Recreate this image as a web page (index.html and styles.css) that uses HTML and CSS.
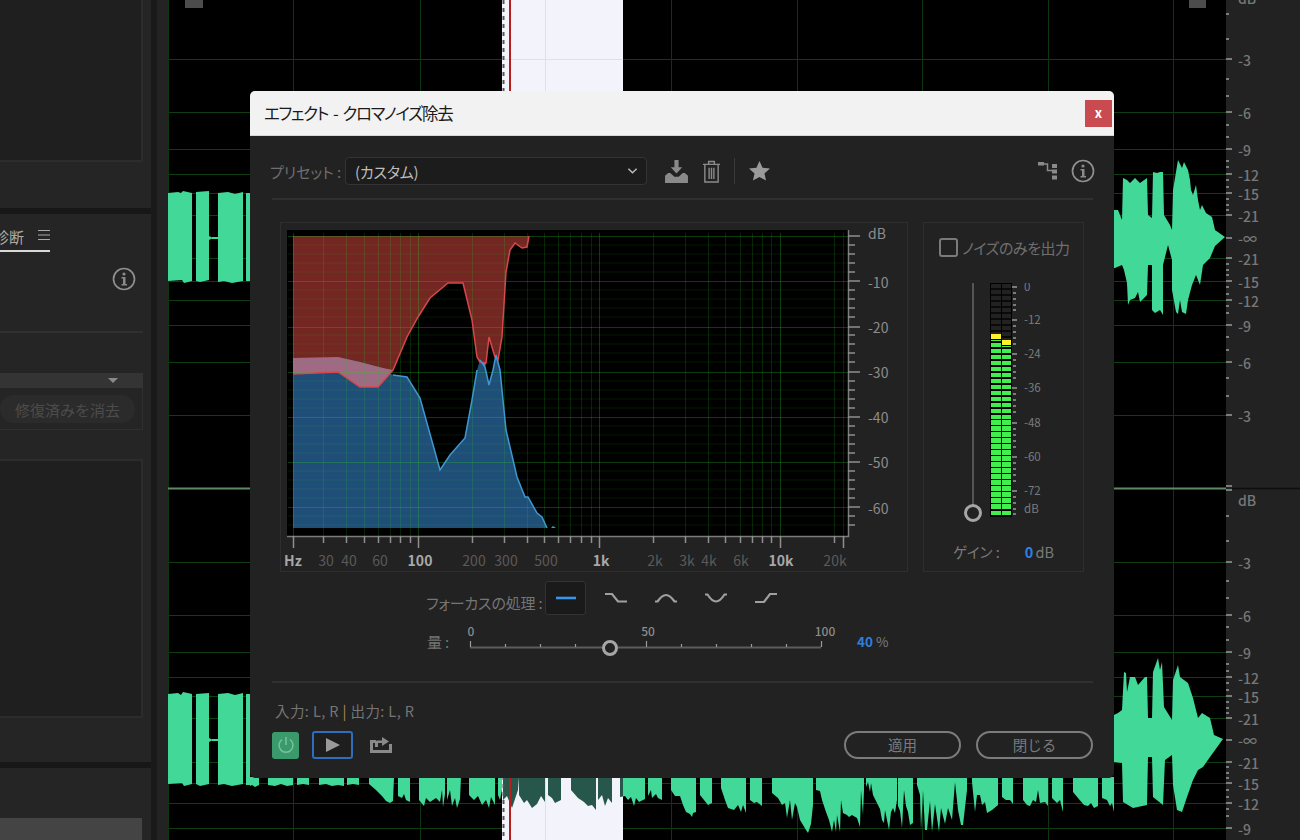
FILE: index.html
```html
<!DOCTYPE html>
<html lang="ja">
<head>
<meta charset="utf-8">
<title>エフェクト - クロマノイズ除去</title>
<link rel="stylesheet" href="styles.css">
</head>
<body>
<div class="app">
  <aside class="side">
    <section class="pane pane-a"><div class="inset inset-a"></div></section>
    <section class="pane pane-b">
      <div class="tabs"><div class="tab"><span class="tab-name">診断</span><svg class="burger" viewBox="0 0 12 12"><path d="M0 1.500H12M0 6H12M0 10.500H12"/></svg></div></div>
      <div class="info-row">
        <svg class="ico-info" viewBox="0 0 24 24"><circle cx="12" cy="12" r="10.5"/><circle class="solid" cx="12" cy="7" r="1.6"/><path class="solid" d="M9.5 10h4v7h1.5v1.5H9.5V17H11v-5.5H9.5z"/></svg>
      </div>
      <div class="side-divider"></div>
      <div class="collapse-bar"><span class="tri"></span></div>
      <div class="clear-box"><button class="clear-btn">修復済みを消去</button></div>
      <div class="inset inset-b"></div>
    </section>
    <section class="pane pane-c"><div class="inset-c"></div></section>
  </aside>
  <div class="gutter"></div>

  <svg class="track" viewBox="168 0 1058 840" preserveAspectRatio="none">
    <defs>
      <clipPath id="outsideSel"><path d="M168 0H502V840H168zM623 0H1226V840H623z"/></clipPath>
      <clipPath id="insideSel"><rect x="502" y="0" width="121" height="840"/></clipPath>
      <path id="strip" d="M250 777V786L252 785 255 787 259 785V777zM268 777V785L275 786 281 784 287 786 293 785V777zM297 777V785L303 784 309 785V777zM319 777V785L326 784 332 786 338 785 344 786V777zM347 777V785L353 784 359 785V777zM369 777V784L376 790 382 796 386 801 390 803 393 801 394 777zM398 777V796L402 798 404 794 406 800 410 802V777zM419 777V800L424 806 426 798 430 802 436 798 440 802 442 790 443 807 445 794V777zM447 777V800L450 790 452 806 455 798 457 808 460 799 461 777zM469 777V795L474 800 478 796 482 805 486 800 489 808 491 797 495 805V777zM498 777V795L500 800 502 790V777zM503 777V800L507 796 512 808 518 790 519 777zM519 777V795L524 803 527 800 532 808 537 804 541 796 545 802V777zM548 777V795L552 798 555 803 561 800V777zM571 777V790L578 798 584 802 588 806 592 805 596 810V777zM598 777V800L602 795 605 806 608 798 612 803V777zM620 777V797L625 796 628 800 631 797 634 806 636 798 639 802 645 799V777zM648 777V796L651 790 652 798 656 794 658 798 662 800V777zM671 777V790L675 796 680 796 683 805 686 812 690 814 692 817 693 813 696 812V777zM700 777V795L704 800 708 805 712 803V777zM721 777V788L725 800 728 808 734 810 738 805 741 812 743 805 746 813V777zM750 777V800L754 803 757 802 762 806V777zM772 777V793L778 798 782 805 785 803 787 818 790 800 792 820 795 803 797 807 800 820 803 825 806 830 808 833 811 824 813 805V777zM816 777V790L820 791 822 800 826 812 829 820 832 832 834 820 836 832 837 815 840 832 841 800 843 813 847 815 849 817 852 815 857 818 860 827 861 790 863 815 864 790V777zM866 777V787L868 782 870 792 871 783 873 795 880 809 882 820 884 823 885 810 889 830 891 812 893 808 895 813 897 800V777zM898 777V806L900 811 902 828 904 790 906 806 908 812 910 825 913 823V777zM917 777V785L920 795 921 830 923 790 925 830 927 830 930 801 932 832 935 804 939 832 941 808 945 824 948 808 952 820 955 782 958 810 961 825 963 825 967 790V777zM972 777V782L975 812 977 795 980 795 982 805 985 802 987 813 992 810 998 805V777zM1002 777V797L1006 800 1010 800 1013 804V777zM1023 777V800L1027 805 1030 806 1033 800 1036 802 1038 790 1040 803 1045 802 1048 806V777zM1052 777V798L1057 803 1060 800 1063 812V777zM1073 777V792L1078 798 1084 805 1088 806 1091 803 1094 808 1098 806V777zM1102 777V798L1107 800 1110 806 1112 803 1114 812V777z"/>
    </defs>
    <rect class="k-black" x="168" y="0" width="1058" height="840"/>
    <rect class="k-sel" x="502" y="0" width="121" height="840"/>
    <g clip-path="url(#outsideSel)">
      <path class="grid-d" d="M168 59.500H1226M168 112.500H1226M168 149.500H1226M168 174.500H1226M168 193.500H1226M168 215.500H1226M168 258.500H1226M168 281.500H1226M168 300.500H1226M168 325.500H1226M168 362.500H1226M168 415.500H1226M168 562.500H1226M168 615.500H1226M168 652.500H1226M168 677.500H1226M168 696.500H1226M168 718.500H1226M168 762.500H1226M168 783.500H1226M168 803.500H1226M168 828.500H1226"/>
      <path class="grid-v" d="M168.500 0V840M293.500 0V840M420.500 0V840M545.500 0V840M671.500 0V840M797.500 0V840M922.500 0V840M1048.500 0V840M1173.500 0V840"/>
      <use href="#strip" class="wave"/>
    </g>
    <g clip-path="url(#insideSel)">
      <path class="grid-l" d="M502 59.500H623M502 562.500H623M502 615.500H623M545.500 0V840"/>
      <use href="#strip" class="wave-sel"/>
    </g>
    <path class="wave-edge" d="M503.500 0V840"/>
    <path class="playhead" d="M510 0V840"/>
    <path class="wave" d="M168 193L178 192 181 193 183 191 192 193V281L184 283 182 280 168 281zM196 192L209 191V280L200 282 196 281zM218 193L228 192 235 194 243 192V281L232 283 224 281 218 282zM246 193H250V281H246zM209 236L213 238 209 240zM212 237H218V239H212z"/>
    <path class="wave" d="M168 694L178 693 181 695 183 692 192 694V784L184 786 182 783 168 784zM196 694L209 693V784L200 786 196 784zM218 694L228 693 235 695 243 693V784L232 786 224 784 218 785zM246 694H250V785H246zM209 738L213 740 209 742zM212 739H218V741H212z"/>
    <path class="wave" d="M1114 210L1118 210 1122 220 1123 178 1127 180 1130 183 1135 178 1140 183 1147 178 1148 215 1152 218 1153 172 1157 173 1160 172 1163 172 1164 215 1170 225 1172 230 1173 190 1178 160 1182 168 1184 162 1188 170 1190 180 1191 190 1193 195 1196 185 1198 200 1200 210 1202 205 1206 213 1212 217 1215 230 1225 237 1215 246 1210 258 1203 265 1200 285 1196 275 1192 285 1188 300 1186 314 1182 312 1180 300 1178 314 1176 312 1172 290 1172 260 1168 245 1163 265 1163 315 1160 310 1155 313 1152 310 1152 265 1148 265 1147 295 1140 302 1138 292 1135 298 1130 300 1128 305 1127 283 1124 270 1122 265 1115 268 1114 268z"/>
    <path class="wave" d="M1114 715L1118 713 1122 710 1124 672 1126 673 1127 692 1130 677 1135 677 1138 685 1145 677 1147 677 1148 718 1152 718 1153 672 1158 658 1160 670 1162 662 1164 707 1172 720 1173 680 1178 665 1180 677 1188 683 1193 698 1198 718 1202 713 1210 718 1214 735 1223 739 1210 757 1203 767 1198 770 1193 780 1187 797 1182 812 1177 810 1173 785 1172 755 1165 760 1163 805 1153 797 1152 757 1148 757 1147 805 1133 808 1123 802 1122 763 1115 762 1114 762z"/>
    <path class="center-line" d="M168 488.500H1226"/>
    <rect class="handle" x="185" y="0" width="18" height="8"/>
    <rect class="handle" x="1189" y="0" width="17" height="8"/>
  </svg>

  <svg class="ruler" viewBox="1226 0 74 840" preserveAspectRatio="none">
    <path class="r-minor" d="M1226 14h3M1226 39h3M1226 79h3M1226 96h3M1226 125h3M1226 137h3M1226 161h3M1226 167h3M1226 180h3M1226 187h3M1226 199h3M1226 205h3M1226 210h3M1226 264h3M1226 270h3M1226 275h3M1226 287h3M1226 294h3M1226 306h3M1226 313h3M1226 337h3M1226 350h3M1226 378h3M1226 396h3M1226 516h3M1226 541h3M1226 581h3M1226 598h3M1226 627h3M1226 640h3M1226 664h3M1226 671h3M1226 683h3M1226 690h3M1226 702h3M1226 708h3M1226 713h3M1226 767h3M1226 773h3M1226 778h3M1226 790h3M1226 797h3M1226 809h3M1226 816h3"/>
    <path class="r-major" d="M1226 59h6M1226 112h6M1226 149h6M1226 174h6M1226 193h6M1226 215h6M1226 238h6M1226 258h6M1226 281h6M1226 300h6M1226 325h6M1226 362h6M1226 415h6M1226 562h6M1226 615h6M1226 652h6M1226 677h6M1226 696h6M1226 718h6M1226 740h6M1226 762h6M1226 783h6M1226 803h6M1226 828h6M1226 486h6M1226 490h6"/>
    <path class="r-sep" d="M1232 488.500H1300"/>
    <g class="r-text">
      <text x="1238" y="4">dB</text><text x="1238" y="66">-3</text><text x="1238" y="119">-6</text><text x="1238" y="156">-9</text>
      <text x="1238" y="181">-12</text><text x="1238" y="200">-15</text><text x="1238" y="222">-21</text><text x="1238" y="244">-∞</text>
      <text x="1238" y="265">-21</text><text x="1238" y="288">-15</text><text x="1238" y="307">-12</text><text x="1238" y="332">-9</text>
      <text x="1238" y="369">-6</text><text x="1238" y="422">-3</text><text x="1238" y="506">dB</text><text x="1238" y="569">-3</text>
      <text x="1238" y="622">-6</text><text x="1238" y="659">-9</text><text x="1238" y="684">-12</text><text x="1238" y="703">-15</text>
      <text x="1238" y="725">-21</text><text x="1238" y="746">-∞</text><text x="1238" y="769">-21</text><text x="1238" y="790">-15</text>
      <text x="1238" y="810">-12</text><text x="1238" y="835">-9</text>
    </g>
  </svg>

  <div class="dialog">
    <header class="titlebar">
      <h1 class="title">エフェクト - クロマノイズ除去</h1>
      <button class="close">x</button>
    </header>
    <div class="body">
      <div class="preset-row">
        <span class="preset-label">プリセット :</span>
        <div class="select"><span>(カスタム)</span>
          <svg class="chev" viewBox="0 0 12 8"><path d="M1.5 1.5L6 6l4.5-4.5"/></svg>
        </div>
        <svg class="ico ico-dl" viewBox="0 0 24 22"><path class="solid" d="M10 0h4v7h3.500L12 13 6.500 7H10zM1 15l3-2.500h2L10 16h4l4-3.500h2l3 2.500v7H1z"/></svg>
        <svg class="ico ico-trash" viewBox="0 0 20 24"><path class="stroke" d="M1 4.500h18M7 4.500V1.500h6v3M3 4.500V23h14V4.500M7.500 8v12M10 8v12M12.500 8v12"/></svg>
        <span class="vsep"></span>
        <svg class="ico ico-star" viewBox="0 0 22 21"><path class="solid" d="M11 0l3.200 7 7.800.8-5.800 5.200 1.700 7.600L11 16.700 4.100 20.600 5.800 13 0 7.800 7.800 7z"/></svg>
        <span class="spacer"></span>
        <svg class="ico ico-route" viewBox="0 0 20 18"><path class="solid" d="M0 0h6v3.500H0zM14 2h5v4h-5zM14 7.500h5v4h-5zM14 13.500h5v4h-5z"/><path class="stroke" d="M6 2h3.500v6.500h4.500"/></svg>
        <svg class="ico-info ico-info-d" viewBox="0 0 24 24"><circle cx="12" cy="12" r="10.500"/><circle class="solid" cx="12" cy="7" r="1.600"/><path class="solid" d="M9.500 10h4v7h1.500v1.500H9.500V17H11v-5.500H9.500z"/></svg>
      </div>
      <div class="rule"></div>

      <div class="panels">
        <div class="graph-box">
          <svg class="plot" viewBox="281 223 626 348">
            <rect class="k-black" x="287" y="230" width="561" height="306"/>
            <path class="red" d="M293 236H529L527 247 522 248 515 243 510 250 506 272 502 337 498 360 495 357 489 337 486 363 480 362 477 357 472 320 463 283H448L430 298 418 317 407 337 393 370 378 387H360L338 372 293 374z"/>
            <path class="blue" d="M293 358L338 357 360 362 383 368 393 375 407 377 420 398 440 470 450 455 465 438 472 400 477 370 480 360 485 367 489 385 493 370 496 355 500 370 506 430 517 477 525 497 528 497 537 513 542 517 547 528H293z"/>
            <path class="blue-dot" d="M551 528l2-2 3 2z"/>
            <path class="overlap" d="M293 358L338 357 360 362 383 368 393 370 378 387H360L338 372 293 374z"/>
            <path class="overlap" d="M477 357L480 360 485 367 486 363 480 362z"/>
            <path class="g-minor" d="M288 245H848M288 254H848M288 263H848M288 272H848M288 290H848M288 299H848M288 308H848M288 317H848M288 335H848M288 344H848M288 353H848M288 362H848M288 381H848M288 390H848M288 399H848M288 408H848M288 426H848M288 435H848M288 444H848M288 453H848M288 471H848M288 480H848M288 489H848M288 498H848M288 516H848M288 525H848"/>
            <path class="g-vmin" d="M323.500 233V536M346.500 233V536M364.500 233V536M378.500 233V536M390.500 233V536M400.500 233V536M410.500 233V536M472.500 233V536M504.500 233V536M527.500 233V536M544.500 233V536M558.500 233V536M570.500 233V536M581.500 233V536M591.500 233V536M653.500 233V536M685.500 233V536M708.500 233V536M725.500 233V536M740.500 233V536M752.500 233V536M762.500 233V536M771.500 233V536M834.500 233V536M843.500 233V536"/>
            <path class="g-major" d="M288 236.500H848M288 281.500H848M288 327.500H848M288 372.500H848M288 417.500H848M288 462.500H848M288 507.500H848M293.500 233V536M418.500 233V536M599.500 233V536M780.500 233V536"/>
            <path class="red-line" d="M529 236L527 247 522 248 515 243 510 250 506 272 502 337 498 360 495 357 489 337 486 363 480 362 477 357 472 320 463 283H448L430 298 418 317 407 337 393 370 378 387H360L338 372 293 374"/>
            <path class="blue-line" d="M393 375L407 377 420 398 440 470 450 455 465 438 472 400 477 370M493 370L496 355 500 370 506 430 517 477 525 497 528 497 537 513 542 517 547 528M480 360L485 367 489 385 493 370"/>
            <path class="axis" d="M287 536.500H848.500V230"/>
            <path class="ticks" d="M848 236h12M848 245h7M848 254h7M848 263h7M848 272h7M848 281h12M848 290h7M848 299h7M848 308h7M848 317h7M848 327h12M848 335h7M848 344h7M848 353h7M848 362h7M848 372h12M848 381h7M848 390h7M848 399h7M848 408h7M848 417h12M848 426h7M848 435h7M848 444h7M848 453h7M848 462h12M848 471h7M848 480h7M848 489h7M848 498h7M848 507h12M848 516h7M848 525h7M293.500 536v12M323.500 536v7M346.500 536v7M364.500 536v7M378.500 536v7M390.500 536v7M400.500 536v7M410.500 536v7M418.500 536v12M472.500 536v7M504.500 536v7M527.500 536v7M544.500 536v7M558.500 536v7M570.500 536v7M581.500 536v7M591.500 536v7M599.500 536v12M653.500 536v7M685.500 536v7M708.500 536v7M725.500 536v7M740.500 536v7M752.500 536v7M762.500 536v7M771.500 536v7M780.500 536v12M834.500 536v7M843.500 536v12"/>
            <g class="db-text">
              <text x="868" y="239">dB</text><text x="868" y="288">-10</text><text x="868" y="333">-20</text><text x="868" y="378">-30</text><text x="868" y="423">-40</text><text x="868" y="468">-50</text><text x="868" y="514">-60</text>
            </g>
            <g class="hz-text">
              <text class="strong" x="293" y="566">Hz</text><text x="326" y="566">30</text><text x="349" y="566">40</text><text x="380" y="566">60</text>
              <text class="strong" x="420" y="566">100</text><text x="474" y="566">200</text><text x="506" y="566">300</text><text x="546" y="566">500</text>
              <text class="strong" x="601" y="566">1k</text><text x="655" y="566">2k</text><text x="687" y="566">3k</text><text x="709" y="566">4k</text><text x="741" y="566">6k</text>
              <text class="strong" x="781" y="566">10k</text><text x="835" y="566">20k</text>
            </g>
          </svg>
        </div>
        <div class="output-box">
          <label class="noise-only"><span class="check"></span><span>ノイズのみを出力</span></label>
          <div class="meter-row">
            <div class="gain-slider"><span class="gain-knob"></span></div>
            <div class="meter">
              <div class="col"><div class="off off-l"></div><div class="yel"></div><div class="grn"></div></div>
              <div class="col"><div class="off off-r"></div><div class="yel"></div><div class="grn"></div></div>
            </div>
            <svg class="scale" viewBox="1013 283 34 234">
              <path class="sc-minor" d="M1014 293h3M1014 299h3M1014 305h3M1014 310h3M1014 326h3M1014 332h3M1014 338h3M1014 344h3M1014 360h3M1014 366h3M1014 372h3M1014 378h3M1014 394h3M1014 400h3M1014 406h3M1014 412h3M1014 429h3M1014 435h3M1014 441h3M1014 447h3M1014 463h3M1014 469h3M1014 475h3M1014 481h3M1014 497h3M1014 503h3M1014 509h3M1014 514h3"/>
              <path class="sc-major" d="M1013 287h5M1013 320h5M1013 354h5M1013 388h5M1013 423h5M1013 457h5M1013 491h5"/>
              <g class="sc-text"><text x="1025" y="291">0</text><text x="1025" y="324">-12</text><text x="1025" y="358">-24</text><text x="1025" y="392">-36</text><text x="1025" y="427">-48</text><text x="1025" y="461">-60</text><text x="1025" y="495">-72</text><text x="1025" y="513">dB</text></g>
            </svg>
          </div>
          <div class="gain"><span class="gain-label">ゲイン :</span><span class="gain-val"><b>0</b> dB</span></div>
        </div>
      </div>

      <div class="focus-row">
        <span class="row-label">フォーカスの処理 :</span>
        <div class="focus-btns">
          <button class="fbtn active"><svg viewBox="0 0 24 12"><path d="M2 6H22"/></svg></button>
          <button class="fbtn"><svg viewBox="0 0 24 12"><path d="M1 2H8L14 9.500H23"/></svg></button>
          <button class="fbtn"><svg viewBox="0 0 24 12"><path d="M1 9.500H3.500Q8 3 12 3T20.500 9.500H23"/></svg></button>
          <button class="fbtn"><svg viewBox="0 0 24 12"><path d="M1 2.500H3.500Q8 9.500 12 9.500T20.500 2.500H23"/></svg></button>
          <button class="fbtn"><svg viewBox="0 0 24 12"><path d="M1 10H10L16 2H23"/></svg></button>
        </div>
      </div>

      <div class="amount-row">
        <span class="row-label amount-label">量 :</span>
        <svg class="amount" viewBox="466 624 376 34">
          <path class="am-track" d="M470 647.500H602M618 647.500H821"/>
          <path class="am-tick" d="M470.500 641v6M505.500 644v3M540.500 644v3M575.500 644v3M646.500 641v6M681.500 644v3M716.500 644v3M751.500 644v3M786.500 644v3M821.500 641v6"/>
          <circle class="knob" cx="610" cy="648" r="6.500"/>
          <g class="am-text"><text x="471" y="636">0</text><text x="648" y="636">50</text><text x="825" y="636">100</text></g>
        </svg>
        <span class="amount-val"><b>40</b> %</span>
      </div>
      <div class="rule rule-b"></div>

      <div class="io">入力: L, R <span class="bar">|</span> 出力: L, R</div>
      <div class="foot">
        <button class="power"><svg viewBox="0 0 20 20"><path d="M6 4.500a7 7 0 1 0 8 0M10 2v8"/></svg></button>
        <button class="play"><span class="play-tri"></span></button>
        <svg class="ico ico-export" viewBox="0 0 22 18"><path class="stroke-2" d="M6 6.500H1.500V16.500H20.500V9"/><path class="solid" d="M5 12V7.500Q5 5.500 7.500 5.500H12V2l7 4.500-7 4.500V8H8v4z"/></svg>
        <span class="spacer"></span>
        <button class="pill apply">適用</button>
        <button class="pill">閉じる</button>
      </div>
    </div>
  </div>
</div>
</body>
</html>
```
FILE: styles.css
```css
* { box-sizing: border-box; }
html, body { margin: 0; height: 100%; background: #171717; }
body { font-family: "Noto Sans CJK JP", "Noto Sans", sans-serif; overflow: hidden; }
button { font-family: inherit; padding: 0; }

.app { position: relative; display: flex; width: 1300px; height: 840px; overflow: hidden; }

/* left column */
.side { width: 151px; flex: none; display: flex; flex-direction: column; gap: 6px; background: #171717; }
.pane { background: #252525; padding-right: 8px; overflow: hidden; }
.pane-a { height: 208px; }
.inset { border: 2px solid #2c2c2c; background: #1f1f1f; }
.inset-a { height: 162px; border-left: 0; border-top: 0; }
.pane-b { height: 548px; display: flex; flex-direction: column; }
.tabs { height: 38px; flex: none; display: flex; }
.tab { width: 50px; height: 38px; display: flex; justify-content: flex-end; align-items: center; gap: 14px; border-bottom: 2px solid #d8d8d8; color: #aaa; font-size: 15px; white-space: nowrap; overflow: hidden; padding-top: 8px; }
.tab-name { flex: none; }
.burger { flex: none; width: 12px; height: 12px; margin-top: -2px; }
.burger path { fill: none; stroke: #a8a8a8; stroke-width: 1.200; }
.info-row { height: 79px; flex: none; display: flex; justify-content: flex-end; padding: 15px 7px 0 0; }
.ico-info { width: 24px; height: 24px; flex: none; }
.ico-info circle { fill: none; stroke: #8f8f8f; stroke-width: 1.7; }
.ico-info .solid, .ico .solid { fill: #8a8a8a; stroke: none; }
.side-divider { height: 2px; flex: none; background: #303030; }
.collapse-bar { height: 15px; flex: none; margin-top: 40px; background: #343434; position: relative; }
.tri { position: absolute; right: 25px; top: 5px; border: 5px solid transparent; border-top-color: #8a8a8a; border-bottom: 0; }
.clear-box { height: 42px; flex: none; border-right: 1px solid #2f2f2f; border-bottom: 1px solid #2f2f2f; padding-top: 7px; }
.clear-btn { display: block; width: 135px; height: 28px; border: 0; border-radius: 14px; background: #2b2b2b; color: #4c4c4c; font-size: 15px; text-align: right; padding-right: 15px; white-space: nowrap; }
.inset-b { height: 259px; flex: none; margin-top: 29px; border-left: 0; }
.pane-c { flex: 1; padding-top: 50px; }
.inset-c { height: 30px; margin-right: 1px; background: #444; }
.gutter { width: 17px; flex: none; background: linear-gradient(90deg, #1a1a1a 0 6px, #232323 6px); }

/* waveform */
.track { width: 1058px; height: 840px; flex: none; display: block; }
.k-black { fill: #000; }
.k-sel { fill: #f3f3fc; }
.grid-d { fill: none; stroke: #0f3f11; stroke-width: 1; }
.grid-v { fill: none; stroke: #0d3510; stroke-width: 1; }
.grid-l { fill: none; stroke: #d5e8dc; stroke-width: 1; }
.wave { fill: #41d898; }
.wave-sel { fill: #27574a; }
.wave-edge { fill: none; stroke: #555; stroke-width: 2; stroke-dasharray: 4 4; }
.playhead { fill: none; stroke: #b81e1e; stroke-width: 2; }
.center-line { fill: none; stroke: #5c8a62; stroke-width: 2; }
.handle { fill: #4c4c4c; }

/* ruler */
.ruler { width: 74px; height: 840px; flex: none; display: block; background: #222; }
.r-minor { fill: none; stroke: #9a9a9a; stroke-width: 1.500; }
.r-major { fill: none; stroke: #9a9a9a; stroke-width: 1.500; }
.r-sep { fill: none; stroke: #0e0e0e; stroke-width: 1.500; }
.r-text text { fill: #777; font-size: 14px; font-weight: 500; }

/* dialog */
.dialog { position: absolute; left: 250px; top: 91px; width: 864px; height: 687px; background: #222; border-radius: 5px; overflow: hidden; display: flex; flex-direction: column; }
.titlebar { height: 45px; flex: none; background: #f2f2f2; border-bottom: 1px solid #d8d8d8; display: flex; align-items: center; justify-content: space-between; padding: 0 2px 0 14px; }
.title { margin: 0; font-size: 16.500px; font-weight: 400; color: #1a1a1a; font-feature-settings: "palt"; letter-spacing: -1.300px; word-spacing: 2.500px; white-space: nowrap; }
.close { width: 27px; height: 27px; border: 0; background: #c94b50; color: #fff; font-size: 13px; font-weight: 700; line-height: 24px; }
.body { flex: 1; display: flex; flex-direction: column; padding: 0 21px 0 22px; min-height: 0; }
.preset-row { height: 62px; flex: none; display: flex; align-items: center; padding-top: 8px; }
.preset-label { width: 75px; flex: none; font-size: 15px; color: #6e6e6e; font-feature-settings: "palt"; white-space: nowrap; margin-left: -2px; }
.select { width: 302px; height: 28px; flex: none; display: flex; align-items: center; justify-content: space-between; padding: 0 8px 0 9px; background: #1c1c1c; border: 1px solid #333; border-radius: 4px; color: #bdbdbd; font-size: 15px; font-feature-settings: "palt"; letter-spacing: -.2px; }
.chev { width: 11px; height: 8px; }
.chev path { fill: none; stroke: #bbb; stroke-width: 1.600; }
.ico { flex: none; display: block; }
.ico-dl { width: 25px; height: 23px; margin-left: 17px; }
.ico-trash { width: 19px; height: 23px; margin-left: 13px; }
.stroke { fill: none; stroke: #8a8a8a; stroke-width: 1.500; }
.stroke-2 { fill: none; stroke: #8a8a8a; stroke-width: 3; }
.vsep { width: 1px; height: 26px; flex: none; background: #3a3a3a; margin-left: 13px; }
.ico-star { width: 21px; height: 20px; margin-left: 14px; }
.ico-star .solid { fill: #9a9a9a; }
.spacer { flex: 1; }
.ico-route { width: 20px; height: 18px; margin-right: 13px; }
.ico-info-d { margin-right: -2px; }
.rule { height: 2px; flex: none; background: #303030; }

.panels { height: 350px; flex: none; margin: 22px 0 0 8px; display: flex; gap: 15px; }
.graph-box { width: 628px; flex: none; border: 1px solid #2e2e2e; }
.plot { display: block; width: 626px; height: 348px; }
.g-minor { fill: none; stroke: rgba(40, 200, 40, .13); stroke-width: 1; }
.g-vmin { fill: none; stroke: rgba(40, 200, 40, .18); stroke-width: 1; }
.g-major { fill: none; stroke: rgba(40, 200, 40, .3); stroke-width: 1; }
.red { fill: #742622; }
.blue { fill: #1f4f78; }
.red-line { fill: none; stroke: #d8464e; stroke-width: 1.500; }
.blue-line { fill: none; stroke: #3f97d2; stroke-width: 1.500; }
.blue-dot { fill: #3f97d2; }
.overlap { fill: #a16a84; }
.axis { fill: none; stroke: #7c7c7c; stroke-width: 1.500; }
.ticks { fill: none; stroke: #8e8e8e; stroke-width: 1.500; }
.db-text text { fill: #8c8c8c; font-size: 14px; }
.hz-text text { fill: #5a5a5a; font-size: 14px; text-anchor: middle; }
.hz-text .strong { fill: #a8a8a8; font-weight: 700; }

.output-box { width: 161px; flex: none; border: 1px solid #2e2e2e; display: flex; flex-direction: column; padding: 14px 0 0 15px; }
.noise-only { display: flex; align-items: center; gap: 4px; height: 20px; font-size: 15px; color: #6f6f6f; white-space: nowrap; font-feature-settings: "palt"; letter-spacing: -.5px; }
.check { width: 19px; height: 19px; flex: none; border: 2px solid #7a7a7a; border-radius: 3px; }
.meter-row { display: flex; height: 234px; margin-top: 26px; }
.gain-slider { position: relative; width: 2px; height: 222px; flex: none; margin-left: 33px; background: #555; }
.gain-knob { position: absolute; left: -8px; top: 221px; width: 18px; height: 18px; border: 3px solid #a6a6a6; border-radius: 50%; background: #222; }
.meter { width: 22px; flex: none; margin-left: 16px; background: #000; display: flex; gap: 1px; padding: 1px 1px 2px; }
.col { width: 9.500px; display: flex; flex-direction: column; }
.off { background: repeating-linear-gradient(#222 0 4px, #0a0a0a 4px 6px); flex: none; }
.off-l { height: 50px; }
.off-r { height: 56px; }
.yel { height: 4.500px; flex: none; margin-bottom: 1.500px; background: #fff02e; }
.grn { flex: 1; background: repeating-linear-gradient(0deg, #42ee4e 0 4.500px, #000 4.500px 6px); }
.scale { width: 34px; height: 234px; flex: none; display: block; }
.sc-minor, .sc-major { fill: none; stroke: #999; stroke-width: 1.500; }
.sc-text text { fill: #7b7b7b; font-size: 11.500px; }
.gain { display: flex; justify-content: space-between; width: 101px; margin: 24px 0 0 14px; font-size: 14.500px; color: #7a7a7a; font-feature-settings: "palt"; white-space: nowrap; }
.gain b, .amount-val b { color: #2f7fe0; font-weight: 600; }
.gain-val { word-spacing: -1px; }

.focus-row { display: flex; align-items: center; flex: none; height: 34px; margin: 9px 0 0 154px; }
.row-label { font-size: 15px; color: #757575; white-space: nowrap; font-feature-settings: "palt"; letter-spacing: -.2px; }
.focus-row .row-label { width: 119px; flex: none; padding-top: 9px; }
.focus-btns { display: flex; gap: 9px; }
.fbtn { width: 41px; height: 34px; border: 1px solid transparent; border-radius: 3px; background: none; display: flex; align-items: center; justify-content: center; }
.fbtn svg { width: 24px; height: 12px; }
.fbtn path { fill: none; stroke: #a0a0a0; stroke-width: 2.200; }
.fbtn.active { background: #1a1a1a; border-color: #333; }
.fbtn.active path { stroke: #3a95ea; stroke-width: 2.600; }
.amount-row { display: flex; align-items: center; flex: none; height: 34px; margin: 9px 0 0 155px; }
.amount-label { width: 39px; flex: none; }
.amount { width: 376px; height: 34px; flex: none; display: block; }
.am-track { fill: none; stroke: #5c5c5c; stroke-width: 2; }
.am-tick { fill: none; stroke: #9a9a9a; stroke-width: 1.200; }
.knob { fill: none; stroke: #a6a6a6; stroke-width: 3; }
.am-text text { fill: #8c8c8c; font-size: 12px; text-anchor: middle; font-weight: 500; }
.amount-val { margin-left: 15px; font-size: 13.500px; color: #7c7c7c; white-space: nowrap; padding-top: 0; }
.rule-b { margin-top: 23px; }
.io { margin: 18px 0 0 3px; height: 20px; font-size: 14.500px; line-height: 20px; color: #757575; white-space: nowrap; font-feature-settings: "palt"; letter-spacing: .4px; flex: none; }
.bar { color: #b08a5a; }
.foot { flex: none; display: flex; align-items: center; margin-top: 9px; height: 30px; }
.power { width: 27px; height: 27px; border: 0; border-radius: 3px; background: #3a9a6c; display: flex; align-items: center; justify-content: center; flex: none; }
.power svg { width: 20px; height: 20px; }
.power path { fill: none; stroke: #79c39b; stroke-width: 1.500; }
.play { width: 41px; height: 28px; margin-left: 13px; flex: none; border: 2px solid #2d6ebd; border-radius: 3px; background: #1e1e1e; display: flex; align-items: center; justify-content: center; }
.play-tri { width: 0; height: 0; border-left: 14px solid #9a9a9a; border-top: 7px solid transparent; border-bottom: 7px solid transparent; }
.ico-export { width: 22px; height: 18px; margin: -3px 0 0 17px; }
.pill { width: 117px; height: 28px; flex: none; border: 2px solid #7c7c7c; border-radius: 14px; background: #222; color: #7a7a7a; font-size: 14.500px; line-height: 24px; }
.apply { margin-right: 15px; }
```
